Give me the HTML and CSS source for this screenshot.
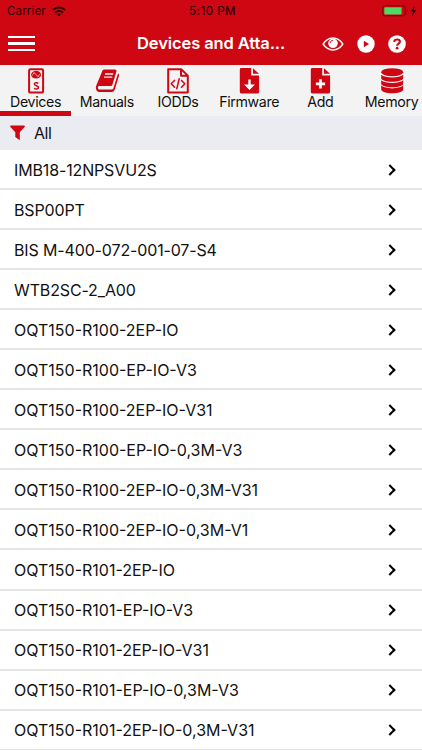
FILE: index.html
```html
<!DOCTYPE html>
<html lang="en">

<head>
    <meta charset="UTF-8">
    <meta name="viewport" content="width=device-width, initial-scale=1.0">
    <title>Devices</title>
    <link rel="stylesheet" href="styles.css">
</head>

<body>
    <header>
        <div class="status-bar">
            <div class="carrier">
                <span>Carrier</span>
                <svg width="14" height="11" viewBox="0 0 14 11" fill="none" stroke="#300003" stroke-width="1.9">
                    <path d="M.7 4.1C4.2.6 9.8.6 13.3 4.1M3 6.7c2.3-2.2 5.7-2.2 8 0"/>
                    <path d="M4.9 8.3c1.2-1.1 3-1.1 4.2 0L7 10.5z" fill="#300003" stroke="none"/>
                </svg>
            </div>
            <span class="clock">5:10 PM</span>
            <svg class="battery" width="36" height="12" viewBox="0 0 36 12">
                <rect x=".7" y=".8" width="22.6" height="10" rx="2.4" fill="none" stroke="#6e0308" stroke-width="1"/>
                <rect x="2.3" y="2.2" width="17.3" height="7.2" rx=".8" fill="#4cd964"/>
                <path d="M24.6 4.2c1.5.5 1.5 2.7 0 3.2z" fill="#6e0308"/>
                <path d="M32.6 1.2 28.7 6.6h2.4l-1 4.4 4.1-5.7h-2.5z" fill="#240003"/>
            </svg>
        </div>

        <div class="nav-bar">
            <button class="menu-btn" aria-label="Menu">
                <span></span>
                <span></span>
                <span></span>
            </button>
            <h1>Devices and Atta...</h1>
            <div class="nav-icons">
                <svg width="22" height="18" viewBox="0 0 22 18" fill="none" stroke="#fff" stroke-width="1.5">
                    <path d="M1.2 9.2C6 1 16 1 20.8 9.2 16 16.8 6 16.8 1.2 9.2z"/>
                    <circle cx="11" cy="8.3" r="4.8" fill="#fff" stroke="none"/>
                    <path d="M8.2 8.1c.1-1.6 1.1-2.6 2.7-2.8" stroke="#ce0713" stroke-width="1"/>
                </svg>
                <svg width="18" height="18" viewBox="0 0 18 18">
                    <circle cx="9" cy="9" r="8.7" fill="#fff"/>
                    <path d="M6.8 5.7v6.6l5.3-3.3z" fill="#ce0713"/>
                </svg>
                <svg width="18" height="18" viewBox="0 0 18 18">
                    <circle cx="9" cy="9" r="8.8" fill="#fff"/>
                    <path d="M6.2 6.9c.4-3.3 5.7-3 5.7-.2 0 2-2.8 1.8-2.8 4" fill="none" stroke="#ce0713" stroke-width="2.1"/>
                    <circle cx="9.1" cy="13.2" r="1.4" fill="#ce0713"/>
                </svg>
            </div>
        </div>
    </header>

    <nav class="tabs">
        <a class="tab active">
            <svg width="24" height="26" viewBox="0 0 24 26" fill="none" stroke="#ce0713">
                <rect x="5.1" y="1.2" width="14" height="23.4" rx="1.2" stroke-width="2"/>
                <ellipse cx="12.1" cy="6.7" rx="5" ry="3.9" fill="#ce0713" stroke="none"/>
                <path d="M8.2 7.6c.4-2.7 3.5-2.7 3.9-.9s3.5 1.8 3.9-.9M9.1 5.3l1.5-.9M13.6 9l1.5-.9" stroke="#f4f3f4" stroke-width=".6"/>
                <path d="M14.3 15.3c-1.2-1-4-.9-4 .8 0 2 4.2 1.3 4.2 3.4 0 1.8-3 1.9-4.4.7" stroke-width="1.5"/>
            </svg>
            <span>Devices</span>
        </a>
        <a class="tab">
            <svg width="24" height="26" viewBox="0 0 24 26">
                <path d="M7.5 2.5Q8 1.5 9.2 1.5H20Q21.8 1.7 21.5 3.3L17.3 17Q17 18 15.8 18H4.5C2.8 18 2.5 19.6 3.2 20.7 3.6 21.4 4.2 21.5 5 21.5H16.7Q18 21.5 18.5 20L23 5.4c1 .7 1.3 1.4 1 2.4l-4.2 13.7Q19 24 16.8 24H4.5C1.5 24 .2 20.8 1.1 18z" fill="#ce0713"/>
                <path d="M10 6h8.2M9 9.2h8.2" stroke="#f4f3f4" stroke-width="1.3"/>
            </svg>
            <span>Manuals</span>
        </a>
        <a class="tab">
            <svg width="24" height="26" viewBox="0 0 24 26" fill="none" stroke="#ce0713" stroke-width="2" stroke-linejoin="round">
                <path d="M2.2 1.2h13l6.6 6.4v17H2.2zM15 1.2v6.5h6.8"/>
                <path d="M8.5 12.4 5.2 15.8l3.3 3.4M15.5 12.4l3.3 3.4-3.3 3.4M13.2 10.8l-2.4 10" stroke-width="1.5" stroke-linecap="round"/>
            </svg>
            <span>IODDs</span>
        </a>
        <a class="tab">
            <svg width="24" height="26" viewBox="0 0 24 26">
                <path d="M4.2.1h10v7.3h7.9v16.7q0 1.4-1.4 1.4H4.2q-1.4 0-1.4-1.4V1.5Q2.8.1 4.2.1zM16 .3l6 5.5h-6z" fill="#ce0713"/>
                <path d="M11.3 11.6h2.4v5h4.2l-5.4 5.5-5.4-5.5h4.2z" fill="#fff"/>
            </svg>
            <span>Firmware</span>
        </a>
        <a class="tab">
            <svg width="24" height="26" viewBox="0 0 24 26">
                <path d="M4.2.1h10v7.3h7.9v16.7q0 1.4-1.4 1.4H4.2q-1.4 0-1.4-1.4V1.5Q2.8.1 4.2.1zM16 .3l6 5.5h-6z" fill="#ce0713"/>
                <path d="M12.5 11.3v9.2M7.9 15.9h9.2" stroke="#fff" stroke-width="2.7"/>
            </svg>
            <span>Add</span>
        </a>
        <a class="tab">
            <svg width="24" height="26" viewBox="0 0 24 26" fill="#ce0713">
                <ellipse cx="12.2" cy="4.2" rx="11" ry="4"/>
                <path d="M1.2 6.7c4 3.7 18 3.7 22 0v3.4c0 5-22 5-22 0z"/>
                <path d="M1.2 12.2c4 3.7 18 3.7 22 0v3.2c0 5-22 5-22 0z"/>
                <path d="M1.2 17.6c4 3.7 18 3.7 22 0v3.7c0 5.4-22 5.4-22 0z"/>
            </svg>
            <span>Memory</span>
        </a>
    </nav>

    <div class="filter">
        <svg width="15" height="16" viewBox="0 0 15 16">
            <path d="M.6.4h13.8q.8.7.2 1.5L9.8 7.3v8L5.3 12V7.3L.4 1.9Q-.1 1 .6.4z" fill="#ce0713"/>
        </svg>
        <span>All</span>
    </div>

    <ul class="devices">
        <li>IMB18-12NPSVU2S</li>
        <li>BSP00PT</li>
        <li>BIS M-400-072-001-07-S4</li>
        <li>WTB2SC-2_A00</li>
        <li>OQT150-R100-2EP-IO</li>
        <li>OQT150-R100-EP-IO-V3</li>
        <li>OQT150-R100-2EP-IO-V31</li>
        <li>OQT150-R100-EP-IO-0,3M-V3</li>
        <li>OQT150-R100-2EP-IO-0,3M-V31</li>
        <li>OQT150-R100-2EP-IO-0,3M-V1</li>
        <li>OQT150-R101-2EP-IO</li>
        <li>OQT150-R101-EP-IO-V3</li>
        <li>OQT150-R101-2EP-IO-V31</li>
        <li>OQT150-R101-EP-IO-0,3M-V3</li>
        <li>OQT150-R101-2EP-IO-0,3M-V31</li>
    </ul>
</body>

</html>
```
FILE: styles.css
```css
* {
    box-sizing: border-box;
}

body {
    margin: 0;
    height: 750px;
    overflow: hidden;
    font-family: Inter, "Liberation Sans", sans-serif;
    font-size: 16px;
    color: #111;
    background-color: #fff;
}

header {
    height: 65px;
    background-color: #ce0713;
}

.status-bar {
    display: grid;
    grid-template-columns: 1fr auto 1fr;
    align-items: center;
    height: 22px;
    padding: 0 4px 0 7px;
    font-size: 11.5px;
    color: #300003;
}

.carrier {
    display: flex;
    align-items: center;
    gap: 6px;
    letter-spacing: 0.15px;
}

.clock {
    font-weight: 500;
    letter-spacing: 0.45px;
}

.battery {
    justify-self: end;
}

.nav-bar {
    display: flex;
    align-items: center;
    height: 43px;
    padding: 0 16px 0 8px;
}

.menu-btn {
    display: flex;
    flex-direction: column;
    gap: 4px;
    width: 27px;
    padding: 0;
    border: none;
    background: none;
}

.menu-btn span {
    height: 2.5px;
    background-color: #fff;
}

h1 {
    margin: -2px 0 0 102px;
    white-space: nowrap;
    font-size: 16.5px;
    font-weight: 600;
    letter-spacing: -0.1px;
    color: #fff;
}

.nav-icons {
    display: flex;
    align-items: center;
    gap: 13px;
    margin-left: auto;
}

.tabs {
    display: grid;
    grid-template-columns: repeat(6, 71.2px);
    height: 51px;
    background-color: #f4f3f4;
}

.tab {
    display: flex;
    flex-direction: column;
    align-items: center;
    padding-top: 3px;
    font-size: 14.2px;
    line-height: 16px;
    letter-spacing: -0.35px;
}

.active {
    border-bottom: 5px solid #ce0713;
}

.filter {
    display: flex;
    align-items: center;
    gap: 9px;
    height: 34px;
    padding: 0 10px;
    letter-spacing: -0.5px;
    background-color: #ebebf2;
}

.devices {
    margin: 0;
    padding: 0;
    list-style: none;
}

.devices li {
    display: flex;
    align-items: center;
    justify-content: space-between;
    height: 40.05px;
    padding: 1px 28px 0 14px;
    border-bottom: 2px solid #e5e5e5;
}

.devices li:nth-child(-n+4) {
    letter-spacing: -0.14px;
}

/* chevron */
.devices li::after {
    content: "";
    width: 6px;
    height: 6px;
    border: solid #000;
    border-width: 2.5px 2.5px 0 0;
    transform: rotate(45deg);
}
```
